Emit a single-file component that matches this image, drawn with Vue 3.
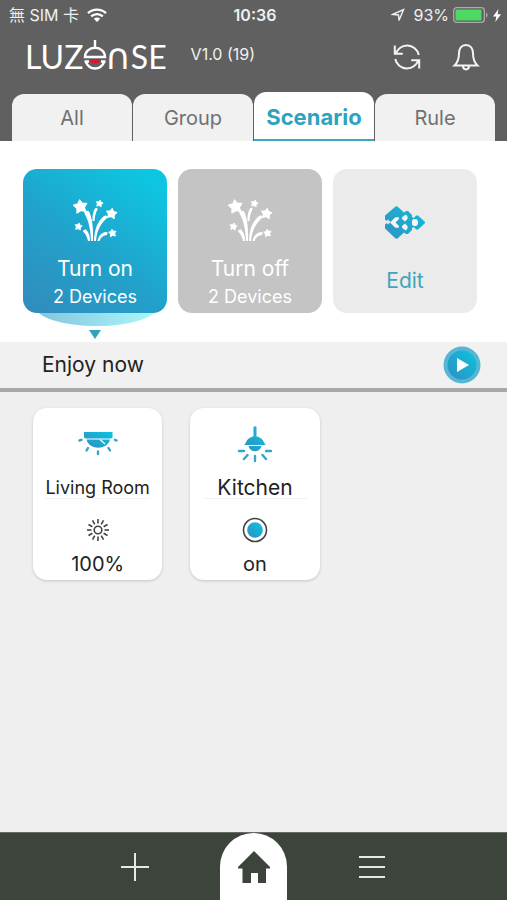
<template>
  <div class="app">
    <header class="top">
      <div class="status">
        <div class="status-left">
          <span>無 SIM 卡</span>
          <svg class="wifi" viewBox="0 0 20 14" aria-hidden="true">
            <path d="M1 5.2a13 13 0 0 1 18 0M4.2 8.4a8.4 8.4 0 0 1 11.6 0" />
            <path class="solid" d="M6.8 10.8a4.6 4.6 0 0 1 6.4 0L10 14z" />
          </svg>
        </div>
        <strong class="clock">10:36</strong>
        <div class="status-right">
          <svg class="locate" viewBox="0 0 14 14" aria-hidden="true">
            <path d="M1.5 6.500 12.500 1.500 8 12.500 7.500 7z" />
          </svg>
          <span>93%</span>
          <svg class="battery" viewBox="0 0 36 16" aria-hidden="true">
            <rect x=".7" y=".7" width="30.600" height="14.600" rx="3" fill="none" stroke="#aaa" stroke-width="1.300" />
            <rect x="2.500" y="2.500" width="26" height="11" rx="1" fill="#4cd964" />
            <path d="M33 5.500c2 .6 2 4.400 0 5z" fill="#aaa" />
          </svg>
          <svg class="bolt" viewBox="0 0 8 13" aria-hidden="true">
            <path d="M5.500 0 0 7.500h3.300L2.300 13 8 5.300H4.600z" fill="#fff" />
          </svg>
        </div>
      </div>

      <div class="brand-row">
        <h1 class="logo" aria-label="LUZENSE">
          <span>LUZ</span>
          <svg class="lamp" viewBox="0 0 24 32" aria-hidden="true">
            <path class="glow" d="M6.500 20h11c-.5 6-10.500 6-11 0z" />
            <path d="M12 1v8M2 18a10 9.300 0 0 1 20 0zM1.500 22.500h4.500M18 22.500h4.500M2.500 22.500c2 4.500 5.500 7 9.500 7s7.500-2.500 9.500-7" />
          </svg>
          <span class="arch">∩</span>
          <span>SE</span>
        </h1>
        <span class="version">V1.0 (19)</span>
        <div class="actions">
          <button class="icon-button" type="button" aria-label="Refresh">
            <svg viewBox="0 0 28 28" aria-hidden="true">
              <path d="M2.500 11.500A12 12 0 0 1 25.800 12M1.800 2.500v8.200h8M25.500 16.500A12 12 0 0 1 2.200 16M26.200 25.500v-8.200h-8" />
            </svg>
          </button>
          <button class="icon-button" type="button" aria-label="Notifications">
            <svg viewBox="0 0 28 28" aria-hidden="true">
              <path d="M2.500 22.500c4-4 4.500-7 4.500-12C7 5.500 9.500 2 14 2s7 3.500 7 8.500c0 5 .5 8 4.500 12zM11 23c0 4.500 6 4.500 6 0" />
            </svg>
          </button>
        </div>
      </div>

      <nav class="tabs">
        <button
          v-for="tab in tabs"
          :key="tab"
          class="tab"
          :class="{ active: tab === activeTab }"
          type="button"
          @click="activeTab = tab"
        >
          {{ tab }}
        </button>
      </nav>
    </header>

    <main class="content">
      <section class="scenarios">
        <div v-for="item in scenarios" :key="item.name" class="slot" :class="item.kind">
          <button class="scenario" type="button">
            <svg v-if="item.kind !== 'edit'" class="firework" viewBox="0 0 46 44" aria-hidden="true">
              <path
                v-for="(star, i) in stars"
                :key="i"
                class="star"
                :d="starPath"
                :transform="`translate(${star.x} ${star.y}) rotate(${star.turn}) scale(${star.size})`"
              />
              <path d="M12.500 14.500c-1-2 3-4 4.500-2C20 18 21.500 28 21 42h-2c-.5-11-2-20-6.500-27.500zM20.500 22c0-6 .5-9 2.500-12.500 1.500-1.500 3-.5 2.500 1C23.500 14 23 17 22.500 22zM22 42c.5-13 4-20 10-25 2-1.500 4 0 3 2-6.500 6-10 12-11 23zM11 32.500c0-1.500 2-2.500 3.500-1.500 2.500 3 3.500 6 3.500 11h-2c-1-4-2-7-5-9.500zM25.500 42c1-5 4-8.500 8.500-9 2 0 2 2.500.5 3-4 1-5.500 2.500-7 6z" />
            </svg>
            <svg v-else class="pixels" viewBox="0 0 40 34" aria-hidden="true">
              <defs>
                <linearGradient id="pixelFill" x1="0" y1="1" x2="1" y2="0">
                  <stop offset="0" stop-color="#2f93c2" />
                  <stop offset="1" stop-color="#12bcd9" />
                </linearGradient>
              </defs>
              <path
                d="M10 1q1.500-1.500 3 0l6 5.500 2-1.500h2l4 4v2l2 1 2-2.500h2l6.500 6q1 1 0 2l-6.500 6h-2l-2-2.500-2 1v2l-4 4h-2l-2-1.500-6 5.500q-1.500 1.500-3 0l-10-9.500v-4l2-1.500 1 1.500 2.500-2.500-2.500-2.500-1 1.500-2-1.500v-4z"
                fill="url(#pixelFill)"
              />
              <path
                d="m10 11.500 3.500-.5.500 2-3.500 3.500 3.500 3.500-.5 2-3.500-.5-5-5zM18.500 10l2.500-1.500 1.500 2V13l-2.500 2.500-3-2.500v-1.500zM18.500 23l2.500 1.500 1.500-2V20L20 17.500 17 20v1.500zM27 14.500l1.500-1.500h3l1.500 2v3l-1.500 2h-3L27 18.500z"
                fill="#f4f6f6"
              />
              <path d="m14.500 14.500 2 2-2 2-2-2z" fill="url(#pixelFill)" />
            </svg>
            <span class="scenario-name">{{ item.name }}</span>
            <span v-if="item.note" class="scenario-note">{{ item.note }}</span>
          </button>
        </div>
      </section>

      <section class="playbar">
        <h2>Enjoy now</h2>
        <button class="play" type="button" aria-label="Play">
          <svg viewBox="0 0 38 38" aria-hidden="true">
            <defs>
              <linearGradient id="playFill" x1="0" y1="1" x2="1" y2="0">
                <stop offset="0" stop-color="#2f8fc0" />
                <stop offset="1" stop-color="#0cc3e0" />
              </linearGradient>
            </defs>
            <circle cx="19" cy="19" r="18.500" fill="#56b6d4" />
            <circle cx="19" cy="19" r="14.500" fill="url(#playFill)" />
            <path d="M14 12v14l12-7z" fill="#fff" />
          </svg>
        </button>
      </section>

      <section class="devices">
        <article class="device">
          <svg class="device-icon" viewBox="0 0 40 40" aria-hidden="true">
            <path d="M6 8h28.500v5.500l-1.500 1h-25.500l-1.500-1zM8.500 15.500h23.500c-2.500 11-21 11-23.500 0z" fill="url(#playFill)" />
            <path class="gloss" d="m22 15.500 5 4.500" />
            <path class="rays" d="M3.500 15.800 1.500 16.500M37 15.800l1.500.7M10 24l-1.500 2.500M30.500 24l1.500 2.500M20 27.500v2.500" />
          </svg>
          <h3>Living Room</h3>
          <svg class="state-icon" viewBox="0 0 26 26" aria-hidden="true">
            <circle cx="13" cy="13" r="3.800" />
            <path v-for="n in 12" :key="n" d="M13 2v4.500" :transform="`rotate(${n * 30} 13 13)`" />
          </svg>
          <span class="state">100%</span>
        </article>

        <article class="device kitchen">
          <svg class="device-icon" viewBox="0 0 40 40" aria-hidden="true">
            <path d="M18.500 3q1.500-1.500 3 0v9.500c4.500.5 7 4 8 7l1.500 1.500h-22l1.500-1.500c1-3 3.500-6.500 8-7zM13.500 22h13c-1.500 7-11.500 7-13 0z" fill="url(#playFill)" />
            <path class="rays" d="M4 27h5M31 27h5M12.500 31l-3.500 4M27.500 31l3.500 4M20 32v5" />
          </svg>
          <h3>Kitchen</h3>
          <svg class="state-icon" viewBox="0 0 26 26" aria-hidden="true">
            <circle cx="13" cy="13" r="11.500" />
            <circle class="dot" cx="13" cy="13" r="7.800" fill="url(#playFill)" />
          </svg>
          <span class="state">on</span>
        </article>
      </section>
    </main>

    <footer class="bottom">
      <button type="button" aria-label="Add">
        <svg viewBox="0 0 30 30" aria-hidden="true"><path d="M15 1v28M1 15h28" /></svg>
      </button>
      <button class="home" type="button" aria-label="Home">
        <svg viewBox="0 0 32 34" aria-hidden="true">
          <path d="M16 1 32 17v1.500h-4V33h-8V23h-7v10H4.500V18.500H0V17z" />
        </svg>
      </button>
      <button type="button" aria-label="Menu">
        <svg viewBox="0 0 30 30" aria-hidden="true"><path d="M2 5h26M2 15h26M2 25h26" /></svg>
      </button>
    </footer>
  </div>
</template>

<script setup>
import { ref } from 'vue'

const tabs = ['All', 'Group', 'Scenario', 'Rule']
const activeTab = ref('Scenario')

const scenarios = [
  { name: 'Turn on', note: '2 Devices', kind: 'on' },
  { name: 'Turn off', note: '2 Devices', kind: 'off' },
  { name: 'Edit', kind: 'edit' },
]

const starPath = 'M0-9 3-4 9-3 5 2 6 8 0 5.500-6 8-5 2-9-3-3-4z'
const stars = [
  { x: 8.5, y: 7.5, turn: -8, size: 0.72 },
  { x: 27.5, y: 4.5, turn: 12, size: 0.38 },
  { x: 39.5, y: 14.5, turn: 8, size: 0.56 },
  { x: 6.5, y: 27.5, turn: 10, size: 0.4 },
  { x: 40.5, y: 34, turn: -8, size: 0.42 },
]
</script>

<style>
body {
  margin: 0;
  background: #efefef;
}
</style>

<style scoped>
.app {
  display: flex;
  flex-direction: column;
  min-height: 100vh;
  color: #222;
  font-family: Inter, "Noto Sans CJK TC", sans-serif;
}

button {
  border: 0;
  padding: 0;
  background: none;
  color: inherit;
  font: inherit;
  cursor: pointer;
}

svg {
  display: block;
}

h1,
h2,
h3 {
  margin: 0;
  font-weight: 400;
}

.top {
  background: #606060;
  color: #f0f0f0;
}

.status {
  display: grid;
  grid-template-columns: 1fr auto 1fr;
  align-items: center;
  height: 30px;
  padding: 0 6px 0 9px;
  font-size: 16px;
  line-height: 20px;
}

.status-left,
.status-right {
  display: flex;
  align-items: center;
  gap: 8px;
}

.status-right {
  justify-content: flex-end;
  gap: 4px;
}

.wifi {
  width: 20px;
  height: 14px;
  fill: none;
  stroke: #fff;
  stroke-width: 2.4;
}

.wifi .solid {
  fill: #fff;
  stroke: none;
}

.clock {
  font-weight: 600;
}

.locate {
  width: 14px;
  height: 14px;
  margin-right: 4px;
  fill: none;
  stroke: #f0f0f0;
  stroke-width: 1.4;
}

.battery {
  width: 36px;
  height: 16px;
}

.bolt {
  width: 8px;
  height: 13px;
}

.brand-row {
  display: flex;
  align-items: center;
  height: 62px;
  padding: 0 27px 8px 25px;
  box-sizing: border-box;
}

.logo {
  display: flex;
  align-items: center;
  color: #fff;
  font-family: Lato, sans-serif;
  font-size: 32px;
  line-height: 32px;
}

.lamp {
  width: 24px;
  height: 32px;
  margin: 0 -3px 4px 0;
  fill: none;
  stroke: #fff;
  stroke-width: 2.4;
}

.lamp .glow {
  fill: #e0142c;
  stroke: none;
}

.arch {
  font-family: "DejaVu Sans", sans-serif;
  font-size: 36px;
}

.version {
  margin: 0 0 6px 24px;
  font-size: 16px;
  line-height: 20px;
}

.actions {
  display: flex;
  gap: 31px;
  margin-left: auto;
}

.icon-button svg {
  width: 28px;
  height: 28px;
  fill: none;
  stroke: #f4f4f4;
  stroke-width: 2;
}

.tabs {
  display: grid;
  grid-template-columns: repeat(4, 1fr);
  align-items: end;
  gap: 1px;
  padding: 0 12px;
}

.tab {
  height: 47px;
  border-radius: 12px 12px 0 0;
  background: #f1f1f1;
  color: #707070;
  font-size: 20px;
  line-height: 24px;
}

.tab.active {
  height: 49px;
  border-bottom: 2px solid #38a9c2;
  padding-top: 3px;
  background: #fff;
  color: #2ea3c0;
  font-size: 22px;
  font-weight: 700;
}

.content {
  flex: 1;
}

.scenarios {
  display: grid;
  grid-template-columns: repeat(3, 1fr);
  gap: 11px;
  padding: 28px 30px 29px 23px;
  background: #fff;
}

.slot {
  position: relative;
  color: #fff;
}

.scenario {
  position: relative;
  display: flex;
  flex-direction: column;
  align-items: center;
  width: 100%;
  aspect-ratio: 1;
  border-radius: 14px;
  padding-top: 30px;
  box-sizing: border-box;
  background: #c4c4c4;
}

.on .scenario {
  background: linear-gradient(35deg, #328bbb 0%, #21a2cb 45%, #0ec5e1 90%);
}

/* glow under the selected scenario */
.on::before {
  position: absolute;
  right: 9px;
  bottom: -13px;
  left: 12px;
  height: 40px;
  border-radius: 0 0 50% 50%;
  background: linear-gradient(90deg, #82c4dd, #aaf8fc);
  content: "";
}

.on::after {
  position: absolute;
  bottom: -26px;
  left: calc(50% - 6px);
  border: 6px solid transparent;
  border-top: 9px solid #30a3b8;
  border-bottom: 0;
  content: "";
}

.edit .scenario {
  padding-top: 37px;
  background: #ebebeb;
  color: #42a4bc;
}

.firework {
  width: 46px;
  height: 44px;
  margin-bottom: 13px;
  fill: #fff;
}

.star {
  stroke: #fff;
  stroke-width: 2;
  stroke-linejoin: round;
}

.pixels {
  width: 40px;
  height: 34px;
  margin-bottom: 28px;
}

.scenario-name {
  font-size: 21px;
  line-height: 26px;
}

.scenario-note {
  margin-top: 2px;
  font-size: 18px;
  line-height: 26px;
}

.playbar {
  display: flex;
  align-items: center;
  justify-content: space-between;
  height: 46px;
  border-bottom: 4px solid #a8a8a8;
  padding: 0 26px 0 42px;
  background: #f1f1f1;
}

.playbar h2 {
  font-size: 21px;
  line-height: 26px;
}

.play svg {
  width: 38px;
  height: 38px;
}

.devices {
  display: grid;
  grid-template-columns: repeat(3, 1fr);
  gap: 28px;
  padding: 16px 30px 16px 33px;
}

.device {
  display: flex;
  flex-direction: column;
  align-items: center;
  border-radius: 14px;
  padding: 16px 0 3px;
  background: #fff;
  box-shadow: 0 1px 3px rgba(0, 0, 0, 0.18);
}

.device-icon {
  width: 40px;
  height: 40px;
}

.gloss {
  stroke: #fff;
  stroke-width: 1.2;
}

.rays {
  fill: none;
  stroke: #35a5cd;
  stroke-width: 2.4;
  stroke-linecap: round;
}

.device h3 {
  margin: 14px 0 18px;
  border-bottom: 1px solid #f3f3f3;
  font-size: 18px;
  line-height: 20px;
  white-space: nowrap;
}

.kitchen h3 {
  padding: 0 14px;
  font-size: 21px;
}

.state-icon {
  width: 26px;
  height: 26px;
  fill: none;
  stroke: #444;
  stroke-width: 1.6;
}

.state-icon .dot {
  fill: url(#playFill);
  stroke: none;
}

.state {
  margin-top: 8px;
  font-size: 20px;
  line-height: 26px;
}

.bottom {
  display: flex;
  align-items: center;
  justify-content: center;
  gap: 70px;
  height: 67px;
  border-top: 1px solid #666b66;
  background: #3d443c;
}

.bottom svg {
  width: 30px;
  height: 30px;
  fill: none;
  stroke: #e4e9e2;
  stroke-width: 2;
}

.bottom .home {
  display: grid;
  place-items: center;
  width: 67px;
  height: 67px;
  border-radius: 34px 34px 0 0;
  background: #fff;
}

.bottom .home svg {
  width: 32px;
  height: 34px;
  fill: #3d443c;
  stroke: none;
}
</style>
